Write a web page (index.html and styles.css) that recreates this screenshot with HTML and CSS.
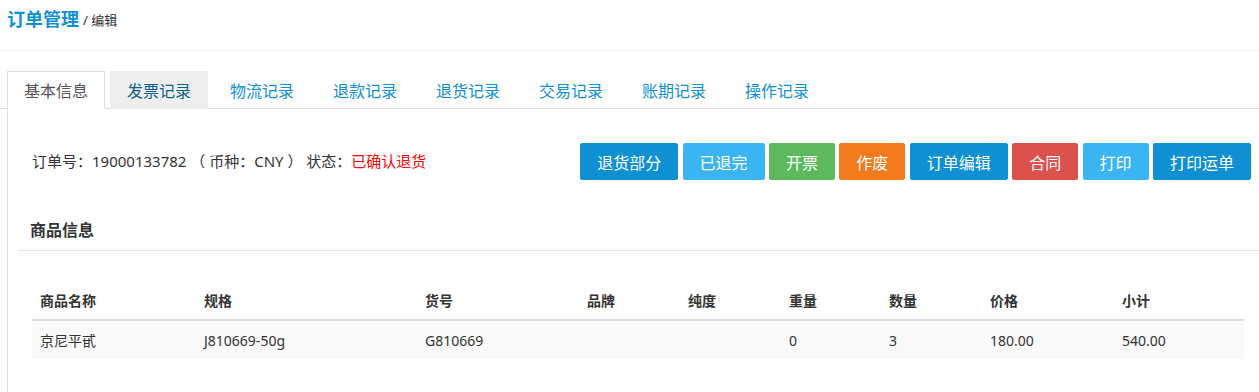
FILE: index.html
```html
<!DOCTYPE html>
<html lang="zh-CN">
<head>
    <meta charset="UTF-8" />
    <meta name="viewport" content="width=device-width, initial-scale=1.0" />
    <title>订单管理 - 编辑</title>
    <link rel="stylesheet" href="styles.css">
</head>
<body>
    <div class="page-header">
        <strong class="page-title">订单管理</strong>
        <small class="page-sub">/ 编辑</small>
    </div>

    <ul class="tabs">
        <li class="tab active">基本信息</li>
        <li class="tab hover">发票记录</li>
        <li class="tab">物流记录</li>
        <li class="tab">退款记录</li>
        <li class="tab">退货记录</li>
        <li class="tab">交易记录</li>
        <li class="tab">账期记录</li>
        <li class="tab">操作记录</li>
    </ul>

    <div class="panel">
        <div class="order-bar">
            <div class="order-info">
                订单号：19000133782 （ 币种：CNY ） 状态：<span class="status">已确认退货</span>
            </div>
            <div class="actions">
                <button class="btn btn-primary">退货部分</button>
                <button class="btn btn-secondary">已退完</button>
                <button class="btn btn-success">开票</button>
                <button class="btn btn-warning">作废</button>
                <button class="btn btn-primary">订单编辑</button>
                <button class="btn btn-danger">合同</button>
                <button class="btn btn-secondary">打印</button>
                <button class="btn btn-primary">打印运单</button>
            </div>
        </div>

        <div class="section-title">商品信息</div>

        <table class="goods">
            <colgroup>
                <col style="width:164px">
                <col style="width:221px">
                <col style="width:162px">
                <col style="width:101px">
                <col style="width:101px">
                <col style="width:100px">
                <col style="width:101px">
                <col style="width:132px">
                <col style="width:130px">
            </colgroup>
            <thead>
                <tr>
                    <th>商品名称</th>
                    <th>规格</th>
                    <th>货号</th>
                    <th>品牌</th>
                    <th>纯度</th>
                    <th>重量</th>
                    <th>数量</th>
                    <th>价格</th>
                    <th>小计</th>
                </tr>
            </thead>
            <tbody>
                <tr>
                    <td>京尼平甙</td>
                    <td>J810669-50g</td>
                    <td>G810669</td>
                    <td></td>
                    <td></td>
                    <td>0</td>
                    <td>3</td>
                    <td>180.00</td>
                    <td>540.00</td>
                </tr>
            </tbody>
        </table>
    </div>
</body>
</html>
```

FILE: styles.css
```css
body {
    margin: 0;
    padding: 0;
    font-family: "Segoe UI", "Noto Sans", "Noto Sans CJK SC", sans-serif;
    color: #333;
    background: #fff;
}

.page-header {
    height: 36px;
    padding: 0 0 14px 7px;
    border-bottom: 1px solid #eee;
    display: flex;
    align-items: center;
    gap: 4px;
}

.page-title {
    font-size: 18px;
    color: #0e90d2;
    font-weight: bold;
}

.page-sub {
    font-size: 13px;
    color: #333;
    padding-top: 2px;
}

.tabs {
    list-style: none;
    margin: 20px 0 0 0;
    padding: 0 0 0 7px;
    display: flex;
    gap: 5px;
    border-bottom: 1px solid #ddd;
}

.tab {
    width: 98px;
    height: 38px;
    box-sizing: border-box;
    display: flex;
    align-items: center;
    justify-content: center;
    font-size: 16px;
    color: #0e90d2;
    border: 1px solid transparent;
    margin-bottom: -1px;
}

.tab.active {
    color: #555;
    background: #fff;
    border-color: #ddd;
    border-bottom-color: #fff;
}

.tab.hover {
    background: #eee;
    color: #095f8a;
}

.panel {
    margin-left: 7px;
    border-left: 1px solid #ddd;
    padding-top: 34px;
    padding-bottom: 40px;
}

.order-bar {
    display: flex;
    justify-content: space-between;
    align-items: center;
    padding: 0 8px 0 24px;
}

.order-info {
    font-size: 15px;
    color: #333;
    padding-bottom: 2px;
}

.status {
    color: #f00;
}

.actions {
    display: flex;
    gap: 4.4px;
}

.btn {
    height: 37px;
    padding: 0 16px;
    font-family: inherit;
    font-size: 16px;
    color: #fff;
    border: 1px solid transparent;
    border-radius: 2px;
    cursor: pointer;
}

.btn-primary { background: #0e90d2; border-color: #0e90d2; }
.btn-secondary { background: #3bb4f2; border-color: #3bb4f2; }
.btn-success { background: #5eb95e; border-color: #5eb95e; }
.btn-warning { background: #f37b1d; border-color: #f37b1d; }
.btn-danger { background: #dd514c; border-color: #dd514c; }

.section-title {
    margin: 30px 0 0 10px;
    padding-left: 12px;
    height: 40px;
    line-height: 40px;
    font-size: 16px;
    font-weight: bold;
    color: #333;
    border-bottom: 1px solid #e5e5e5;
}

.goods {
    margin: 30px 0 0 24px;
    width: 1212px;
    table-layout: fixed;
    border-collapse: collapse;
    font-size: 14px;
}

.goods th,
.goods td {
    text-align: left;
    padding: 0 8px;
    height: 38px;
    color: #333;
}

.goods th {
    font-weight: bold;
    border-bottom: 2px solid #ddd;
}

.goods tbody tr {
    background: #f9f9f9;
}
```
